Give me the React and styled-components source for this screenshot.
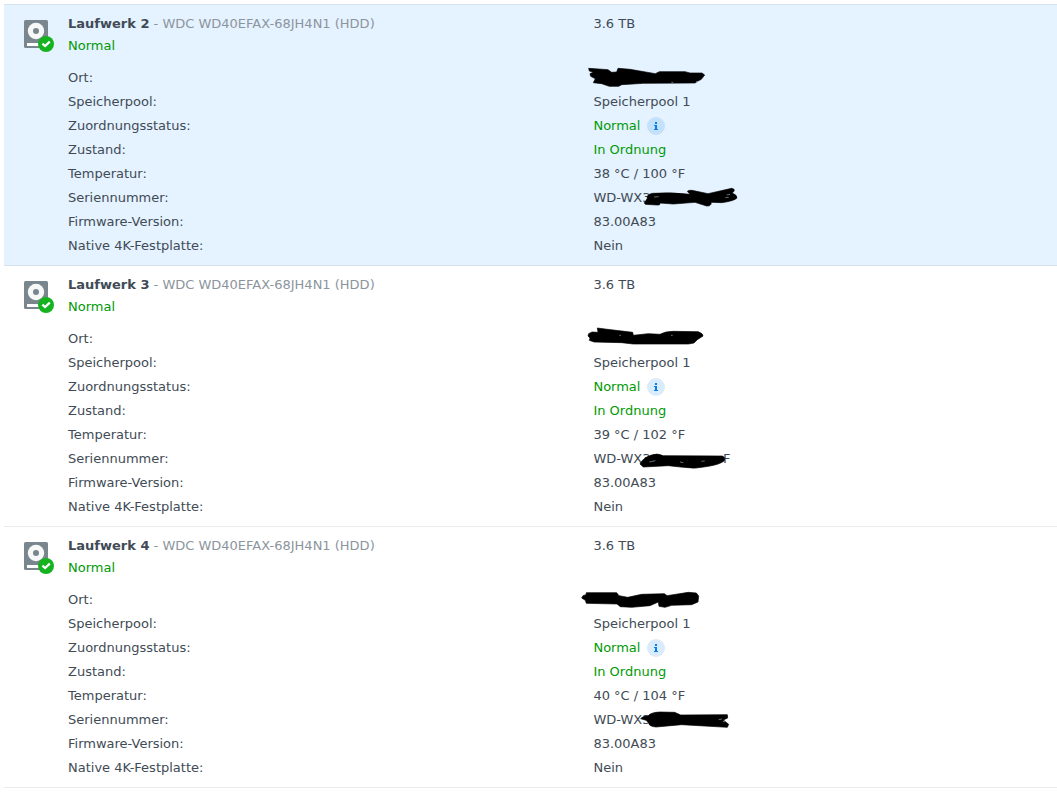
import React from 'react';
import styled, { createGlobalStyle } from 'styled-components';

const drives = [
  {
    name: 'Laufwerk 2',
    model: 'WDC WD40EFAX-68JH4N1 (HDD)',
    size: '3.6 TB',
    temperature: '38 °C / 100 °F',
    selected: true,
    locationMark: {
      origin: '15 3',
      path: 'M26 22 L84 26 L95 34 L110 33 L114 22 L150 25 L226 38 L238 32 L315 32 L330 36 L366 36 L374 42 L364 55 L354 60 L345 66 L190 67 L125 71 L116 76 L88 76 L65 68 L40 65 L46 53 L32 46 L30 38 L40 34 L28 30 Z',
      flecks: 'M274 64 h6 M348 62 h6',
    },
    serialMark: {
      origin: '15 3',
      path: 'M193 66 L202 52 Q200 40 218 37 Q270 33 330 40 L322 31 Q326 27 336 28 L384 38 L455 22 Q466 24 462 31 L456 36 Q472 42 471 51 Q462 60 425 65 L394 64 Q394 76 380 75 L345 64 L280 69 L240 66 Q242 73 230 72 L196 70 Z',
      flecks: 'M222 48 l14 -1 M440 42 l10 -2 M436 50 l10 -1',
    },
  },
  {
    name: 'Laufwerk 3',
    model: 'WDC WD40EFAX-68JH4N1 (HDD)',
    size: '3.6 TB',
    temperature: '39 °C / 102 °F',
    serialEnd: 'F',
    locationMark: {
      origin: '15 0',
      path: 'M52 21 L75 24 L158 34 L160 43 L205 38 L240 40 Q256 31 280 31 L355 32 Q370 38 369 45 L352 56 L342 66 L325 69 L160 69 L125 65 L42 63 L28 58 L30 51 L24 45 L26 38 L36 33 L54 34 Z',
      flecks: 'M118 43 h5 M273 43 h5',
    },
    serialMark: {
      origin: '15 15',
      path: 'M180 54 Q186 38 212 28 Q232 20 250 29 L428 30 Q438 36 432 45 Q420 55 385 61 Q345 70 310 64 L265 59 L190 63 Z',
      flecks: 'M208 48 l18 -4 M300 48 l10 2 M364 46 l10 -1',
    },
  },
  {
    name: 'Laufwerk 4',
    model: 'WDC WD40EFAX-68JH4N1 (HDD)',
    size: '3.6 TB',
    temperature: '40 °C / 104 °F',
    locationMark: {
      origin: '0 12',
      path: 'M34 20 L125 20 L132 29 L158 34 L200 25 L268 23 L276 29 L340 19 L364 21 L371 30 L369 48 L350 56 L290 58 L270 64 L252 61 L250 48 L225 59 L170 64 L136 62 L126 54 L34 52 L31 43 L20 36 L24 29 L33 26 Z',
    },
    serialMark: {
      origin: '15 12',
      path: 'M182 38 Q188 29 204 30 Q212 19 240 18 L284 19 L302 27 L442 26 L443 36 L430 42 L446 55 L442 64 L305 56 L228 63 Q206 61 206 50 L198 43 Z',
      flecks: 'M416 41 l10 -2 M428 47 h8',
    },
  },
];

const DriveIcon = () => (
  <IconSvg viewBox="0 0 30 32" aria-hidden="true">
    <rect width="24" height="28" rx="1.5" fill="#7a868e" />
    <circle cx="12" cy="11" r="8.2" fill="#fff" fillOpacity="0.94" />
    <circle cx="12" cy="11" r="3" fill="#7a868e" />
    <rect x="3" y="23" width="13" height="3" fill="#fff" />
    <circle cx="22" cy="24" r="8" fill="#16b321" />
    <path d="M18.4 23.6 L21.1 26.1 L25.8 21.6" fill="none" stroke="#fff" strokeWidth="2.2" />
  </IconSvg>
);

const Scribble = ({ mark }) => (
  <ScribbleSvg viewBox="0 0 510 108" aria-hidden="true">
    <g transform={`translate(${mark.origin})`}>
      <path d={mark.path} stroke="#000" strokeWidth="2" strokeLinejoin="round" />
      {mark.flecks && <path d={mark.flecks} fill="none" stroke="#9aa1a8" strokeWidth="2" />}
    </g>
  </ScribbleSvg>
);

const Drive = ({ drive }) => (
  <DriveItem $selected={drive.selected}>
    <DriveIcon />
    <Content>
      <Header>
        <div>
          <Title>
            <strong>{drive.name}</strong> - {drive.model}
          </Title>
          <Status>Normal</Status>
        </div>
        <div>{drive.size}</div>
      </Header>
      <Details>
        <dt>Ort:</dt>
        <dd>
          <Scribble mark={drive.locationMark} />
        </dd>
        <dt>Speicherpool:</dt>
        <dd>Speicherpool 1</dd>
        <dt>Zuordnungsstatus:</dt>
        <dd>
          <Good>Normal</Good>
          <InfoButton type="button" aria-label="Info">
            <svg viewBox="0 0 18 18" width="18" height="18" aria-hidden="true">
              <path d="M8 5h2v2H8z M7 8h3v4h1v1H7v-1h1V9H7z" fill="#057feb" />
            </svg>
          </InfoButton>
        </dd>
        <dt>Zustand:</dt>
        <dd>
          <Good>In Ordnung</Good>
        </dd>
        <dt>Temperatur:</dt>
        <dd>{drive.temperature}</dd>
        <dt>Seriennummer:</dt>
        <dd>
          <Serial>
            <span>WD-WX3</span>
            <span>{drive.serialEnd}</span>
          </Serial>
          <Scribble mark={drive.serialMark} />
        </dd>
        <dt>Firmware-Version:</dt>
        <dd>83.00A83</dd>
        <dt>Native 4K-Festplatte:</dt>
        <dd>Nein</dd>
      </Details>
    </Content>
  </DriveItem>
);

const App = () => (
  <>
    <GlobalStyle />
    <DriveList>
      {drives.map((drive) => (
        <Drive key={drive.name} drive={drive} />
      ))}
    </DriveList>
  </>
);

const GlobalStyle = createGlobalStyle`
  * {
    box-sizing: border-box;
  }

  body {
    margin: 0;
    background: #fff;
    color: #414b55;
    font-family: Verdana, 'DejaVu Sans', sans-serif;
    font-size: 13px;
  }
`;

const DriveList = styled.ul`
  margin: 4px 0 0 4px;
  padding: 0;
  list-style: none;
  border-top: 1px solid #d5e1eb;
`;

const DriveItem = styled.li`
  display: flex;
  gap: 14px;
  padding: 8px 0 7px 20px;
  background: ${({ $selected }) => ($selected ? '#e5f2ff' : '#fff')};
  border-bottom: 1px solid ${({ $selected }) => ($selected ? '#d5e1eb' : '#ebebeb')};
`;

const IconSvg = styled.svg`
  flex: none;
  width: 30px;
  height: 32px;
  margin-top: 7px;
`;

const Content = styled.div`
  flex: 1;
`;

const Header = styled.div`
  display: grid;
  grid-template-columns: 17fr 15fr;
  margin-bottom: 9px;
  line-height: 22px;
`;

const Title = styled.div`
  color: #8c959d;

  strong {
    color: #414b55;
  }
`;

const Good = styled.span`
  color: #009a05;
`;

const Status = styled(Good)`
  display: block;
`;

const Details = styled.dl`
  display: grid;
  grid-template-columns: 17fr 15fr;
  grid-auto-rows: 24px;
  margin: 0;
  line-height: 24px;

  dd {
    position: relative;
    display: flex;
    align-items: center;
    margin: 0;
  }
`;

const InfoButton = styled.button`
  display: flex;
  margin-left: 7px;
  padding: 0;
  border: 0;
  border-radius: 50%;
  background: rgba(5, 127, 235, 0.15);
  cursor: pointer;
`;

const Serial = styled.span`
  display: flex;
  justify-content: space-between;
  width: 137px;
`;

const ScribbleSvg = styled.svg`
  position: absolute;
  top: -6px;
  left: -18px;
  width: 170px;
  height: 36px;
  overflow: visible;
`;

export default App;
